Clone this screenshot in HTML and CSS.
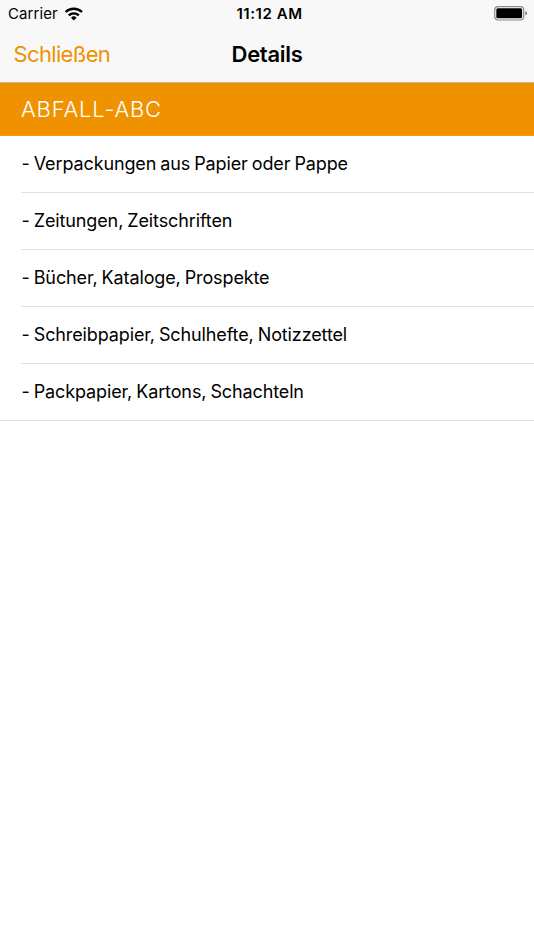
FILE: index.html
```
<!DOCTYPE html>
<html lang="de">
<head>
    <title>Details</title>
    <meta charset="utf-8">
    <link rel="stylesheet" href="styles.css">
</head>
<body>
    <header>
        <div class="status">
            <div class="carrier">
                <span class="carrier-name">Carrier</span>
                <svg class="wifi" width="20" height="14" viewBox="0 0 20 14">
                    <path d="M1.6 5a11.8 11.8 0 0 1 16.4 0" fill="none" stroke="#000" stroke-width="2.4"/>
                    <path d="M4.8 8.3a7.2 7.2 0 0 1 10 0" fill="none" stroke="#000" stroke-width="2.3"/>
                    <path d="M9.8 13.4L7 10.7a4 4 0 0 1 5.6 0z"/>
                </svg>
            </div>
            <div class="time">11:12 AM</div>
            <div class="battery">
                <svg width="34" height="15" viewBox="0 0 34 15">
                    <rect x=".7" y=".6" width="29" height="13.4" rx="3.5" fill="none" stroke="#8a8a8a" stroke-width="1.2"/>
                    <rect x="2.3" y="2.3" width="25.8" height="10" rx="1.5"/>
                    <path d="M31.3 5v4.5q1.8-.8 1.8-2.25T31.3 5z" fill="#777"/>
                </svg>
            </div>
        </div>
        <nav>
            <a class="close" href="#">Schließen</a>
            <h1>Details</h1>
        </nav>
    </header>
    <main>
        <h2>ABFALL-ABC</h2>
        <ul>
            <li>- Verpackungen aus Papier oder Pappe</li>
            <li>- Zeitungen, Zeitschriften</li>
            <li>- Bücher, Kataloge, Prospekte</li>
            <li>- Schreibpapier, Schulhefte, Notizzettel</li>
            <li>- Packpapier, Kartons, Schachteln</li>
        </ul>
    </main>
</body>
</html>
```

FILE: styles.css
```
body {
    margin: 0;
    background: #fff;
    color: #000;
    font-family: Inter, "Liberation Sans", sans-serif;
}
header {
    height: 83px;
    box-sizing: border-box;
    background: #f8f8f8;
    border-bottom: 1px solid #c9b796;
}
.status, nav {
    display: grid;
    grid-template-columns: 1fr auto 1fr;
    align-items: center;
}
.status {
    height: 27px;
    font-size: 15px;
}
.carrier {
    display: flex;
    align-items: center;
    padding-left: 8px;
}
.carrier-name {
    letter-spacing: .1px;
}
.wifi {
    margin-left: 6px;
}
.time {
    padding-left: 5px;
    font-weight: 600;
    letter-spacing: .55px;
}
.battery {
    display: flex;
    justify-content: flex-end;
    padding-right: 6px;
}
nav {
    height: 54px;
}
.close {
    padding-left: 13.5px;
    color: #f09200;
    font-size: 22px;
    letter-spacing: -.65px;
    text-decoration: none;
}
h1 {
    margin: 0;
    font-size: 22px;
    font-weight: 600;
    letter-spacing: -.3px;
}
h2 {
    height: 53px;
    box-sizing: border-box;
    margin: 0;
    padding-left: 21px;
    background: #f09200;
    color: #fff;
    font-size: 22px;
    font-weight: 300;
    line-height: 52px;
    letter-spacing: .8px;
    border-bottom: 1px solid #ec9a20;
}
ul {
    margin: 0;
    padding: 0 0 0 21px;
    list-style: none;
    border-bottom: 1px solid #e2e2e2;
}
li {
    height: 57px;
    box-sizing: border-box;
    padding-left: .5px;
    border-bottom: 1px solid #e2e2e2;
    font-size: 18px;
    line-height: 56px;
    letter-spacing: -.12px;
    word-spacing: -.9px;
}
li:last-child {
    height: 56px;
    border-bottom: 0;
}
```
